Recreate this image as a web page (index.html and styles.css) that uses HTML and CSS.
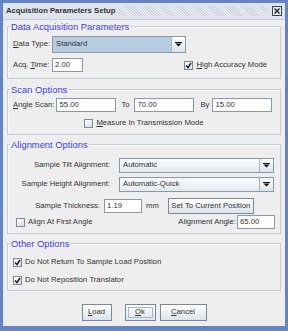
FILE: index.html
```html
<!DOCTYPE html>
<html lang="en">

    <head>
        <meta charset="UTF-8">
        <title>Acquisition Parameters Setup</title>
        <link rel="stylesheet" href="styles.css">
    </head>

    <body>
        <div class="window">
            <div class="titlebar">
                <span class="title">Acquisition Parameters Setup</span>
                <span class="hatch"></span>
                <span class="close">
                    <svg width="10" height="10" viewBox="0 0 10 10">
                        <rect x="0.5" y="0.5" width="9" height="9" fill="#e6ebf2" stroke="#3c4a5c"/>
                        <path d="M2.5 2.5 L7.5 7.5 M7.5 2.5 L2.5 7.5" stroke="#1c2430" stroke-width="1.4"/>
                    </svg>
                </span>
            </div>

            <div class="content">
                <fieldset class="group group-data">
                    <legend>Data Acquisition Parameters</legend>
                    <div class="row">
                        <span class="lbl"><u>D</u>ata Type:</span>
                        <div class="combo combo-active type-combo">
                            <span class="combo-text">Standard</span>
                            <span class="arrow"><svg width="7" height="5" viewBox="0 0 7 5"><path d="M0 0 H7 V1 H0 Z M0.5 1.5 H6.5 L3.5 4.5 Z" fill="#111"/></svg></span>
                        </div>
                    </div>
                    <div class="row row-gap">
                        <span class="lbl">Acq. <u>T</u>ime:</span>
                        <span class="field acq-field">2.00</span>
                        <span class="check push">
                            <span class="box"><svg width="7" height="7" viewBox="0 0 7 7"><path d="M1 3.5 L3 5.5 L6 1" fill="none" stroke="#222" stroke-width="1.5"/></svg></span>
                            <span><u>H</u>igh Accuracy Mode</span>
                        </span>
                    </div>
                </fieldset>

                <fieldset class="group group-scan">
                    <legend>Scan Options</legend>
                    <div class="row">
                        <span class="lbl"><u>A</u>ngle Scan:</span>
                        <span class="field scan-field">55.00</span>
                        <span class="lbl to-lbl">To</span>
                        <span class="field scan-field">70.00</span>
                        <span class="lbl by-lbl">By</span>
                        <span class="field scan-field">15.00</span>
                    </div>
                    <div class="row row-center">
                        <span class="check">
                            <span class="box"></span>
                            <span><u>M</u>easure In Transmission Mode</span>
                        </span>
                    </div>
                </fieldset>

                <fieldset class="group group-align">
                    <legend>Alignment Options</legend>
                    <div class="row">
                        <span class="lbl right-lbl">Sample Tilt Alignment:</span>
                        <div class="combo align-combo">
                            <span class="combo-text">Automatic</span>
                            <span class="arrow"><svg width="7" height="5" viewBox="0 0 7 5"><path d="M0 0 H7 V1 H0 Z M0.5 1.5 H6.5 L3.5 4.5 Z" fill="#111"/></svg></span>
                        </div>
                    </div>
                    <div class="row height-row">
                        <span class="lbl right-lbl">Sample Height Alignment:</span>
                        <div class="combo align-combo">
                            <span class="combo-text">Automatic-Quick</span>
                            <span class="arrow"><svg width="7" height="5" viewBox="0 0 7 5"><path d="M0 0 H7 V1 H0 Z M0.5 1.5 H6.5 L3.5 4.5 Z" fill="#111"/></svg></span>
                        </div>
                    </div>
                    <div class="row thick-row">
                        <span class="lbl thick-lbl">Sample Thickness:</span>
                        <span class="field thick-field">1.19</span>
                        <span class="lbl mm-lbl">mm</span>
                        <span class="btn set-btn">Set To Current Position</span>
                    </div>
                    <div class="row angle-row">
                        <span class="check">
                            <span class="box"></span>
                            <span>Align At First Angle</span>
                        </span>
                        <span class="lbl push">Alignment Angle:</span>
                        <span class="field angle-field">65.00</span>
                    </div>
                </fieldset>

                <fieldset class="group group-other">
                    <legend>Other Options</legend>
                    <div class="row">
                        <span class="check">
                            <span class="box"><svg width="7" height="7" viewBox="0 0 7 7"><path d="M1 3.5 L3 5.5 L6 1" fill="none" stroke="#222" stroke-width="1.5"/></svg></span>
                            <span>Do Not Return To Sample Load Position</span>
                        </span>
                    </div>
                    <div class="row">
                        <span class="check">
                            <span class="box"><svg width="7" height="7" viewBox="0 0 7 7"><path d="M1 3.5 L3 5.5 L6 1" fill="none" stroke="#222" stroke-width="1.5"/></svg></span>
                            <span>Do Not Reposition Translator</span>
                        </span>
                    </div>
                </fieldset>

                <div class="buttons">
                    <span class="btn load-btn"><u>L</u>oad</span>
                    <span class="btn ok-btn"><span class="focus"><u>O</u>k</span></span>
                    <span class="btn cancel-btn"><u>C</u>ancel</span>
                </div>
            </div>
        </div>
    </body>

</html>
```

FILE: styles.css
```css
body {
    margin: 0;
    font-family: "Liberation Sans", Arial, sans-serif;
    font-size: 7.7px;
    line-height: 1.15;
    color: #333333;
}

.window {
    width: 288px;
    height: 331px;
    box-sizing: border-box;
    border: 3px solid #6683c4;
    border-bottom-width: 5px;
    background: #eeeeee;
    display: flex;
    flex-direction: column;
}

.titlebar {
    height: 16px;
    display: flex;
    align-items: center;
    background: #dfe4ec;
    border-bottom: 1px solid #c8d0dc;
    padding: 0 3px;
}

.title {
    font-weight: bold;
    color: #333;
    padding-right: 4px;
}

.hatch {
    flex: 1;
    height: 10px;
    background: repeating-linear-gradient(45deg, #cbd5e4 0 1px, #e8edf4 1px 2px);
}

.close {
    display: flex;
    margin-left: 4px;
}

.content {
    flex: 1;
    display: flex;
    flex-direction: column;
    padding: 1px 4px 0 4px;
}

.group {
    margin: 0;
    border: 1px solid #c6ced9;
    box-shadow: inset 1px 1px 0 #fafbfc;
    padding: 0 5px;
    min-width: 0;
}

.group legend {
    color: #3a3af2;
    font-size: 9.4px;
    line-height: 11px;
    padding: 0 1px;
    margin-left: -3px;
}

.row {
    display: flex;
    align-items: center;
}

.row-center {
    justify-content: center;
}

.push {
    margin-left: auto;
}

.lbl {
    white-space: nowrap;
}

u {
    text-decoration: underline;
    text-underline-offset: 1px;
}

.field {
    box-sizing: border-box;
    height: 14px;
    background: #ffffff;
    border: 1px solid #8c98a6;
    padding: 0 2px;
    display: flex;
    align-items: center;
}

.combo {
    box-sizing: border-box;
    display: flex;
    border: 1px solid #8c98a6;
    background: linear-gradient(#fbfcfd, #e4e9ef);
}

.combo-active {
    background: #b9cde2;
}

.combo-text {
    flex: 1;
    display: flex;
    align-items: center;
    padding-left: 3px;
}

.arrow {
    width: 13px;
    display: flex;
    align-items: center;
    justify-content: center;
    border-left: 1px solid #a9b4c1;
    background: linear-gradient(#ffffff, #dbe3ec);
}

.check {
    display: flex;
    align-items: center;
    gap: 3px;
}

.box {
    box-sizing: border-box;
    width: 9px;
    height: 9px;
    border: 1px solid #7d8997;
    background: linear-gradient(135deg, #ffffff, #d6dee8);
    display: flex;
    align-items: center;
    justify-content: center;
}

.btn {
    box-sizing: border-box;
    height: 17px;
    display: flex;
    align-items: center;
    justify-content: center;
    border: 1px solid #7d8997;
    background: linear-gradient(#ffffff, #dce3eb);
    white-space: nowrap;
}

/* data acquisition */
.group-data {
    padding-top: 4px;
    padding-bottom: 6px;
}

.group-data .lbl {
    width: 39px;
}

.type-combo {
    width: 134px;
    height: 17px;
}

.row-gap {
    margin-top: 5px;
    padding-right: 8px;
}

.acq-field {
    width: 31px;
}

/* scan options */
.group-scan {
    margin-top: 5px;
    padding-top: 3px;
    padding-bottom: 6px;
}

.scan-field {
    width: 60px;
    margin-left: 2px;
}

.to-lbl {
    margin-left: 5px;
    width: 11px;
}

.by-lbl {
    margin-left: 6px;
    width: 10px;
}

.group-scan .row-center {
    margin-top: 7px;
}

/* alignment */
.group-align {
    margin-top: 4px;
    padding-top: 8px;
    padding-bottom: 4px;
}

.right-lbl {
    width: 97px;
    text-align: right;
}

.align-combo {
    width: 155px;
    height: 15px;
    margin-left: 9px;
}

.height-row {
    margin-top: 4px;
}

.thick-row {
    margin-top: 6px;
}

.thick-lbl {
    width: 87px;
    text-align: right;
}

.thick-field {
    width: 38px;
    margin-left: 4px;
}

.mm-lbl {
    margin-left: 4px;
}

.set-btn {
    width: 86px;
    height: 16px;
    margin-left: 9px;
}

.angle-row {
    margin-top: 1px;
    padding-left: 3px;
}

.angle-field {
    width: 38px;
    margin-left: 1px;
}

/* other */
.group-other {
    margin-top: 4px;
    padding-top: 9px;
    padding-bottom: 5px;
}

.group-other .row + .row {
    margin-top: 9px;
}

/* dialog buttons */
.buttons {
    display: flex;
    justify-content: center;
    margin-top: 13px;
}

.load-btn {
    width: 30px;
}

.ok-btn {
    width: 31px;
    margin-left: 13px;
    padding: 2px;
}

.ok-btn .focus {
    flex: 1;
    align-self: stretch;
    display: flex;
    align-items: center;
    justify-content: center;
    border: 1px solid #a8b6c6;
}

.cancel-btn {
    width: 47px;
    margin-left: 4px;
}
```
